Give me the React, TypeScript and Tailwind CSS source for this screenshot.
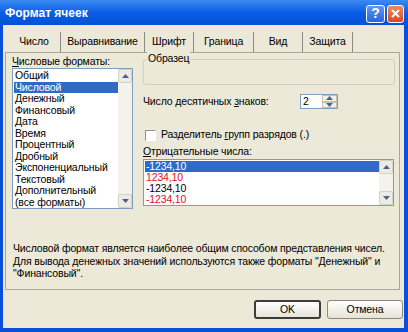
import React from "react";

const formats = [
  "Общий",
  "Числовой",
  "Денежный",
  "Финансовый",
  "Дата",
  "Время",
  "Процентный",
  "Дробный",
  "Экспоненциальный",
  "Текстовый",
  "Дополнительный",
  "(все форматы)",
];

const negatives = [
  { text: "-1234,10", red: false, sel: true },
  { text: "1234,10", red: true, sel: false },
  { text: "-1234,10", red: false, sel: false },
  { text: "-1234,10", red: true, sel: false },
];

const tabs = ["Число", "Выравнивание", "Шрифт", "Граница", "Вид", "Защита"];

const Arrow = ({ up }: { up?: boolean }) => (
  <svg width="7" height="4" viewBox="0 0 7 4">
    <path d={up ? "M0 4 L3.5 0 L7 4 Z" : "M0 0 L7 0 L3.5 4 Z"} fill="#4d6185" />
  </svg>
);

const ScrollBar = () => (
  <div className="flex w-[14px] flex-col justify-between bg-[#f3f2ec]">
    <div className="flex h-[14px] items-center justify-center rounded-[2px] border border-[#d4d2c6] bg-[#ecebe4]">
      <Arrow up />
    </div>
    <div className="flex h-[14px] items-center justify-center rounded-[2px] border border-[#d4d2c6] bg-[#ecebe4]">
      <Arrow />
    </div>
  </div>
);

export default function App() {
  return (
    <div
      className="flex h-[332px] w-[408px] flex-col bg-[#0a4fd8] text-[10.5px] tracking-[-0.15px] text-black"
      style={{ fontFamily: '"Liberation Sans", Arial, sans-serif' }}
    >
      {/* title bar */}
      <div className="flex h-[25px] items-center justify-between bg-gradient-to-b from-[#3b8af0] via-[#0a5de8] to-[#0451d6] pl-[5px] pr-[4px]">
        <span className="text-[12px] font-bold tracking-normal text-white">Формат ячеек</span>
        <div className="flex gap-[2px] pt-[2px]">
          <div className="flex h-[18px] w-[19px] items-center justify-center rounded-[3px] border border-white bg-gradient-to-b from-[#5d97f5] to-[#2a63de] text-[14px] font-bold text-white">
            ?
          </div>
          <div className="flex h-[18px] w-[17px] items-center justify-center rounded-[3px] border border-white bg-gradient-to-b from-[#ec8a64] to-[#d6451f]">
            <svg width="9" height="9" viewBox="0 0 9 9">
              <path d="M1 1 L8 8 M8 1 L1 8" stroke="#fff" strokeWidth="2" />
            </svg>
          </div>
        </div>
      </div>

      {/* body */}
      <div className="mb-[4px] ml-[3px] mr-[4px] flex flex-1 flex-col bg-[#ece9d8] pt-[7px]">
        {/* tabs */}
        <div className="ml-[5px] flex h-[20px] items-center">
          {tabs.map((t, i) => (
            <div
              key={t}
              className={`flex h-[20px] items-center justify-center border-r border-[#8a8a80] ${
                i === 0 ? "w-[53px]" : ""
              } ${i === 1 ? "w-[84px]" : ""} ${i === 2 ? "w-[49px]" : ""} ${
                i === 3 ? "w-[60px]" : ""
              } ${i === 4 ? "w-[49px]" : ""} ${i === 5 ? "w-[50px]" : ""}`}
            >
              {t}
            </div>
          ))}
        </div>

        {/* panel */}
        <div className="ml-[2px] flex h-[238px] w-[395px] flex-col border border-[#a9a799] bg-[#ece9d8] pl-[6px] pt-[2px]">
          <div className="flex gap-[10px]">
            {/* left column */}
            <div className="flex w-[121px] flex-col">
              <div className="h-[13px] leading-[13px]">
                <span className="underline">Ч</span>исловые форматы:
              </div>
              <div className="flex h-[141px] border border-[#7f9db9] bg-white">
                <div className="flex-1 pl-[1px] pt-[1px]">
                  {formats.map((f, i) => (
                    <div
                      key={f}
                      className={`h-[11.5px] pl-[1px] leading-[11.5px] ${
                        i === 1 ? "bg-[#316ac5] text-white" : ""
                      }`}
                    >
                      {f}
                    </div>
                  ))}
                </div>
                <ScrollBar />
              </div>
            </div>

            {/* right column */}
            <div className="flex w-[252px] flex-col">
              <div className="relative mt-[4px] h-[26px] rounded-[3px] border border-[#d0d0bf]">
                <span className="absolute left-[3px] top-[-8px] bg-[#ece9d8] px-[1px] leading-[13px]">
                  Образец
                </span>
              </div>
              <div className="mt-[9px] flex h-[15px] items-center">
                <span className="w-[157px]">
                  Число десятичных <span className="underline">з</span>наков:
                </span>
                <div className="flex h-[15px] w-[38px] border border-[#7f9db9] bg-white">
                  <div className="flex-1 pl-[2px] leading-[13px]">2</div>
                  <div className="flex w-[15px] flex-col">
                    <div className="flex h-[6.5px] items-center justify-center border border-[#c3c1b4] bg-[#f0efe8]">
                      <Arrow up />
                    </div>
                    <div className="flex h-[6.5px] items-center justify-center border border-[#c3c1b4] bg-[#f0efe8]">
                      <Arrow />
                    </div>
                  </div>
                </div>
              </div>
              <div className="mt-[20px] flex h-[12px] items-center gap-[5px] pl-[2px]">
                <div className="h-[11px] w-[11px] border border-[#8e8f8f] border-b-white border-r-white bg-white" />
                <span>
                  Разделитель <span className="underline">г</span>рупп разрядов (.)
                </span>
              </div>
              <div className="mt-[4px] h-[13px] leading-[13px]">
                <span className="underline">О</span>трицательные числа:
              </div>
              <div className="mt-[1px] flex h-[47px] w-[251px] border border-[#7f9db9] bg-white">
                <div className="flex-1 pl-[1px] pt-[1px]">
                  {negatives.map((n, i) => (
                    <div
                      key={i}
                      className={`h-[11px] pl-[1px] leading-[11px] ${
                        n.sel ? "bg-[#316ac5] text-white" : n.red ? "text-[#e0101c]" : ""
                      }`}
                    >
                      {n.text}
                    </div>
                  ))}
                </div>
                <ScrollBar />
              </div>
            </div>
          </div>

          <div className="mt-[33px] whitespace-nowrap pl-[1px] leading-[12.5px]">
            <div>Числовой формат является наиболее общим способом представления чисел.</div>
            <div>Для вывода денежных значений используются также форматы "Денежный" и</div>
            <div>"Финансовый".</div>
          </div>
        </div>

        {/* buttons */}
        <div className="mr-[1px] mt-[10px] flex justify-end gap-[6px]">
          <button className="h-[19px] w-[67px] rounded-[3px] border-2 border-[#3c3c3c] bg-gradient-to-b from-white to-[#e6e3d6]">
            OK
          </button>
          <button className="h-[19px] w-[76px] rounded-[3px] border border-[#8c8a80] bg-gradient-to-b from-white to-[#e6e3d6]">
            Отмена
          </button>
        </div>
      </div>
    </div>
  );
}
